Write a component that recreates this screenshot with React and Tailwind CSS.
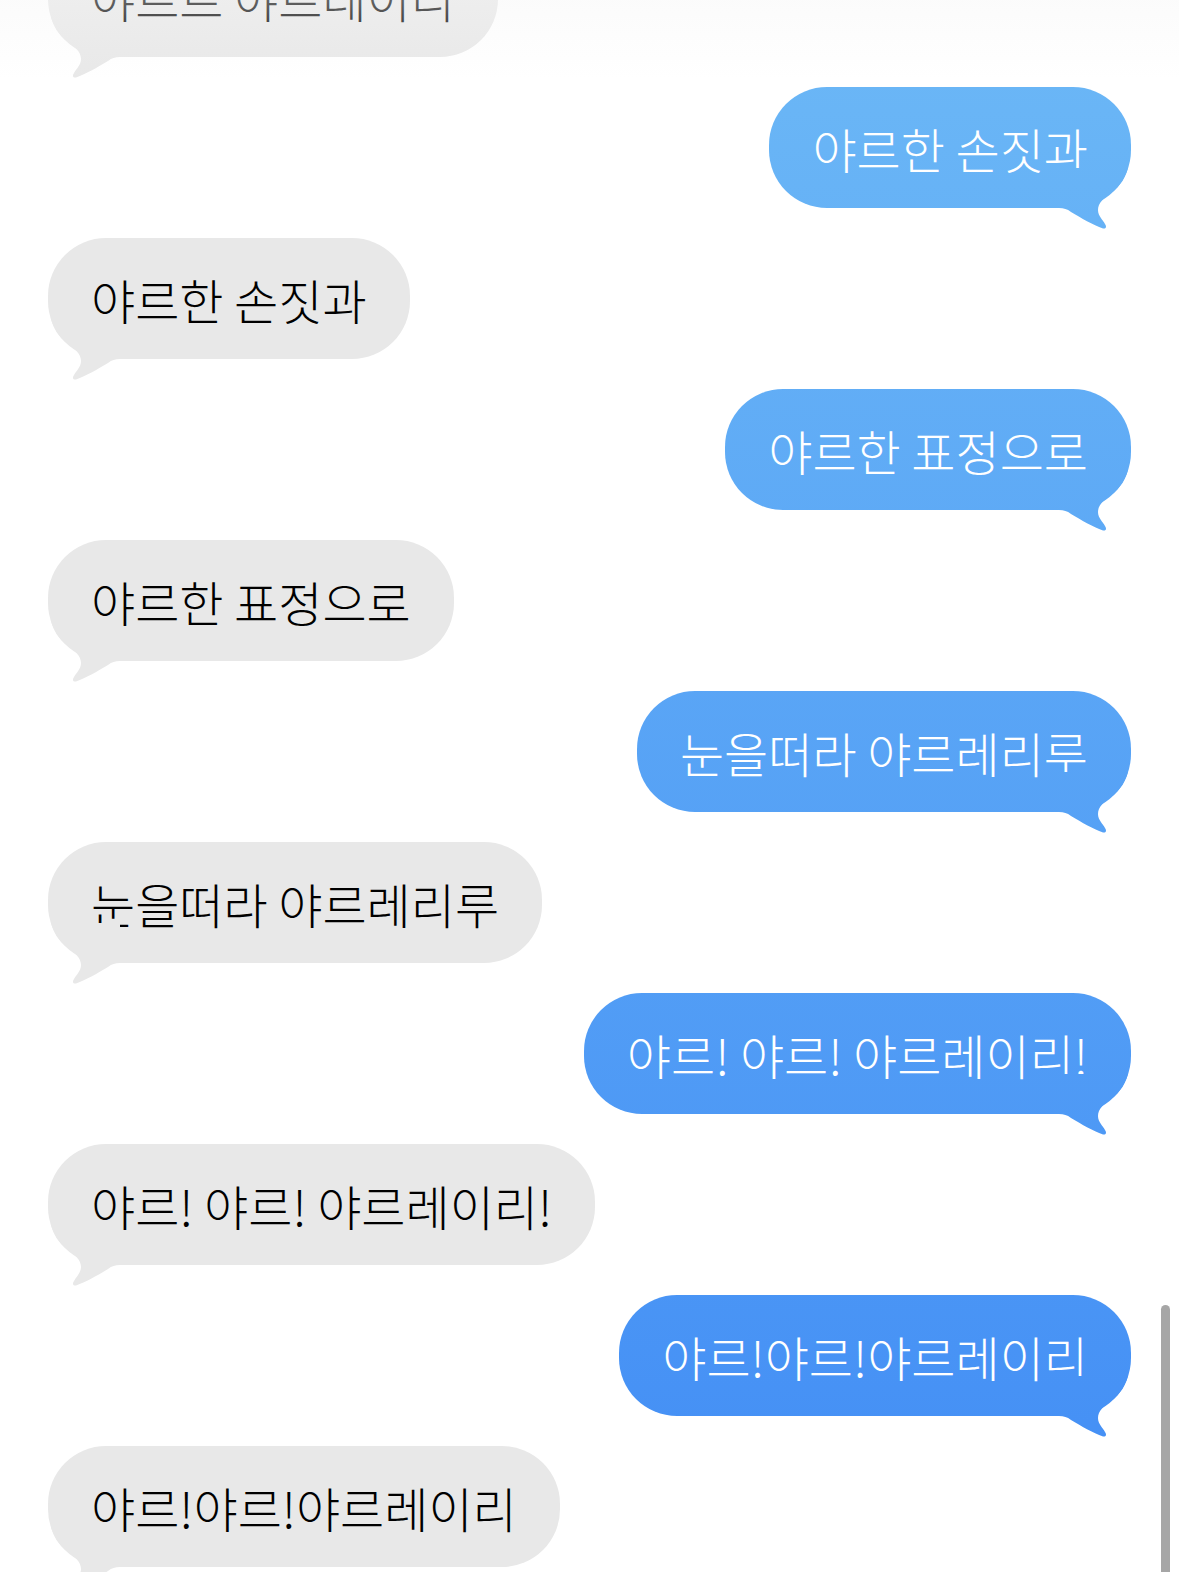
const MESSAGES = [
  { me: false, text: '야르르 야르레이리' },
  { me: true, text: '야르한 손짓과' },
  { me: false, text: '야르한 손짓과' },
  { me: true, text: '야르한 표정으로' },
  { me: false, text: '야르한 표정으로' },
  { me: true, text: '눈을떠라 야르레리루' },
  { me: false, text: '눈을떠라 야르레리루' },
  { me: true, text: '야르! 야르! 야르레이리!' },
  { me: false, text: '야르! 야르! 야르레이리!' },
  { me: true, text: '야르!야르!야르레이리' },
  { me: false, text: '야르!야르!야르레이리' },
]

// blue follows one gradient over the whole screen, like iMessage
const BLUE = 'bg-fixed bg-[linear-gradient(to_bottom,#6cb8f6,#428df5)]'
const GRAY = 'bg-[#e8e8e8]'

function Bubble({ me, text }) {
  return (
    <div
      className={`relative flex h-[121px] items-center whitespace-nowrap rounded-[58px] px-[43px] text-[48px] font-light leading-none ${
        me ? `self-end text-white ${BLUE}` : `self-start text-black ${GRAY}`
      }`}
    >
      <span>{text}</span>
      {me ? (
        <div
          className={`absolute right-0 top-[81px] h-[62px] w-[72px] [clip-path:path('M69_0_C67_8,62_18,52_25_C45_30,39_35,39_42_C39_48,44_52,46_56_C48_59,47_61,44_60.5_C34_57,22_50,12_44_C8_41,5_40,0_40_L0_0_Z')] ${BLUE}`}
        />
      ) : (
        <div
          className={`absolute left-0 top-[81px] h-[62px] w-[72px] [clip-path:path('M3_0_C5_8,10_18,20_25_C27_30,33_35,33_42_C33_48,28_52,26_56_C24_59,25_61,28_60.5_C38_57,50_50,60_44_C64_41,67_40,72_40_L72_0_Z')] ${GRAY}`}
        />
      )}
    </div>
  )
}

export default function App() {
  return (
    <div
      className="relative h-[1572px] w-full overflow-hidden bg-white"
      style={{ fontFamily: '"Noto Sans CJK KR", "Noto Sans", sans-serif' }}
    >
      <div className="-mt-[64px] flex flex-col gap-[30px] pl-[48px] pr-[48px]">
        {MESSAGES.map((m, i) => (
          <Bubble key={i} me={m.me} text={m.text} />
        ))}
      </div>

      {/* top fade under the nav bar */}
      <div className="pointer-events-none absolute inset-x-0 top-0 h-[80px] bg-[linear-gradient(to_bottom,rgba(246,246,246,0.4),rgba(255,255,255,0))]" />

      {/* scroll indicator */}
      <div className="absolute right-[9px] top-[1305px] h-[300px] w-[9px] rounded-full bg-[#a6a6a6]" />
    </div>
  )
}
